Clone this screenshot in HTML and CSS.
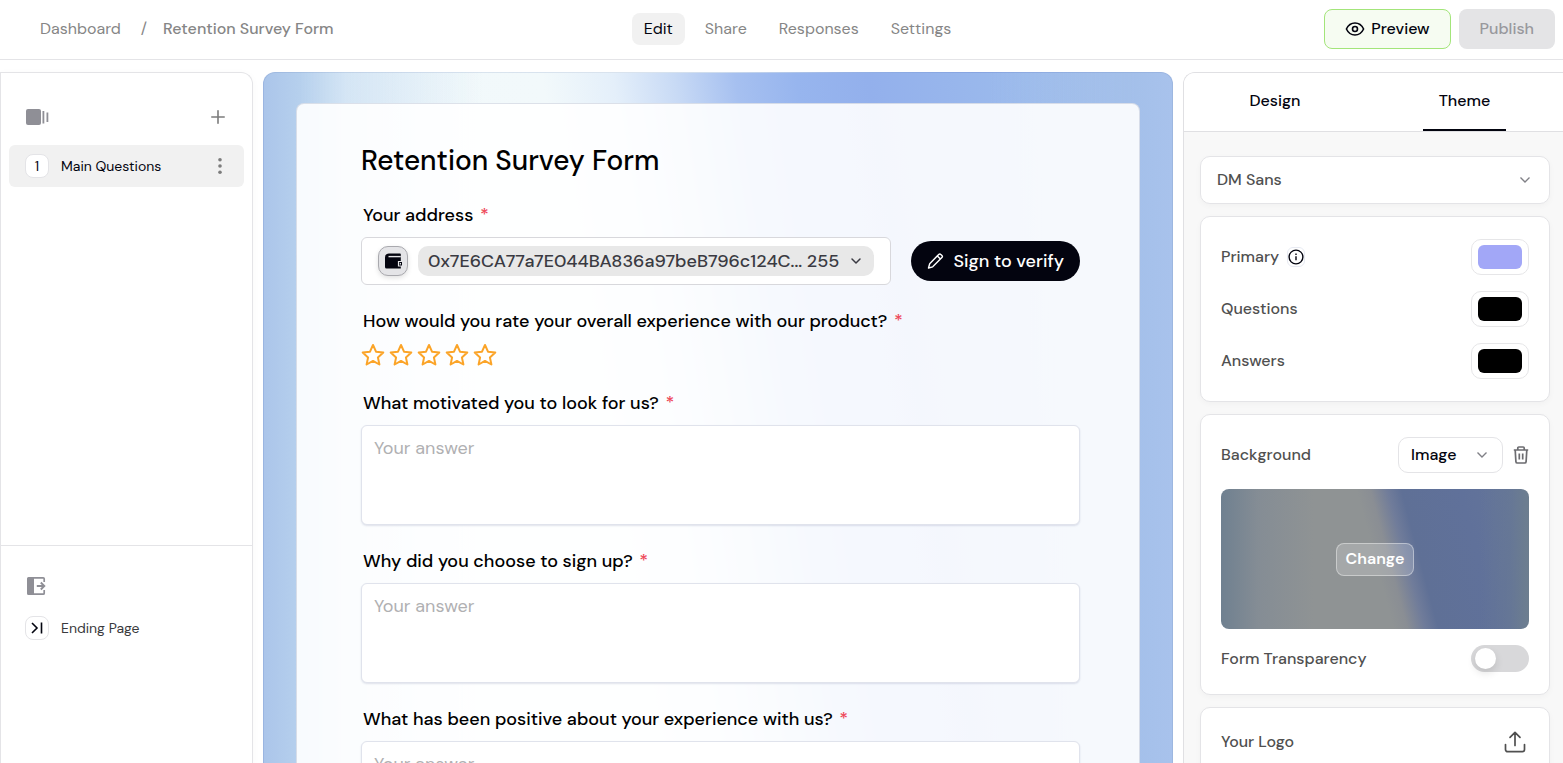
FILE: index.html
```html
<!DOCTYPE html>
<html lang="en">
<head>
<meta charset="utf-8">
<meta name="viewport" content="width=device-width, initial-scale=1">
<title>Retention Survey Form</title>
<link rel="stylesheet" href="styles.css">
</head>
<body>
<header class="topbar">
  <nav class="crumbs" aria-label="Breadcrumb">
    <a href="#">Dashboard</a><span class="slash">/</span><a href="#" class="current">Retention Survey Form</a>
  </nav>
  <nav class="tabs" aria-label="Form sections">
    <a href="#" class="active">Edit</a>
    <a href="#">Share</a>
    <a href="#">Responses</a>
    <a href="#">Settings</a>
  </nav>
  <div class="actions">
    <button class="btn preview" type="button">
      <svg width="20" height="20" viewBox="0 0 20 20" fill="none" stroke="currentColor" stroke-width="1.600"><path d="M1.400 10C3.200 6.200 6.300 4 10 4s6.800 2.200 8.600 6c-1.800 3.800-4.900 6-8.600 6s-6.800-2.200-8.600-6z" stroke-linejoin="round"/><circle cx="10" cy="10" r="2.500"/></svg>
      Preview
    </button>
    <button class="btn publish" type="button" disabled>Publish</button>
  </div>
</header>

<main class="workspace">
  <aside class="pages">
    <section class="pages-top">
      <div class="pages-head">
        <svg width="24" height="18" viewBox="0 0 24 18" fill="currentColor"><rect x="0" y="1" width="15" height="16" rx="2"/><rect x="16.500" y="3" width="1.800" height="12.500"/><rect x="20.500" y="4.500" width="1.800" height="9.500"/></svg>
        <button class="icon-btn" type="button" aria-label="Add page">
          <svg width="14" height="14" viewBox="0 0 14 14" stroke="currentColor" stroke-width="1.600" stroke-linecap="round"><path d="M7 .8v12.400M.8 7h12.400"/></svg>
        </button>
      </div>
      <div class="page-row selected">
        <span class="badge">1</span>
        <span class="page-name">Main Questions</span>
        <button class="icon-btn" type="button" aria-label="Page options">
          <svg width="14" height="18" viewBox="0 0 14 18" fill="currentColor"><circle cx="7" cy="2.700" r="1.800"/><circle cx="7" cy="9" r="1.800"/><circle cx="7" cy="15.300" r="1.800"/></svg>
        </button>
      </div>
    </section>
    <section class="pages-end">
      <div class="end-head">
        <svg width="20" height="20" viewBox="0 0 20 20" fill="none"><path d="M2.500 1H8v18H2.500A1.500 1.500 0 0 1 1 17.500v-15A1.500 1.500 0 0 1 2.500 1z" fill="currentColor"/><path d="M7 1.800h10.200a1 1 0 0 1 1 1V6M7 18.200h10.200a1 1 0 0 0 1-1V14" stroke="currentColor" stroke-width="1.700"/><path d="M10.800 10h7M14.800 6.500l3.500 3.500-3.500 3.500" stroke="currentColor" stroke-width="1.900"/></svg>
      </div>
      <div class="page-row">
        <span class="badge"><svg width="12" height="12" viewBox="0 0 12 12" fill="none" stroke="currentColor" stroke-width="1.600"><path d="M1 1l5 5-5 5M10.500.5v11"/></svg></span>
        <span class="page-name ending">Ending Page</span>
      </div>
    </section>
  </aside>

  <section class="canvas">
    <form class="survey">
      <h1>Retention Survey Form</h1>

      <div class="question">
        <label for="wallet">Your address <span class="req">*</span></label>
        <div class="address-line">
          <div class="address-box">
            <span class="wallet-icon"><svg width="18" height="18" viewBox="0 0 18 18"><path d="M5 1.500h11a.8.800 0 0 1 .8.800v14.200H2.500A1.500 1.500 0 0 1 1 15V5.500a4 4 0 0 1 4-4z" fill="#03040f"/><path d="M4.500 4.600h12.300" stroke="#e4e4e7" stroke-width="1.400"/><path d="M18 9.500h-3.500v4.500H18" fill="#03040f" stroke="#e4e4e7" stroke-width="1.200"/><path d="M15.800 11h1.200v1.500h-1.200z" fill="#e4e4e7"/></svg></span>
            <button class="address-pill" id="wallet" type="button">
              <span>0x7E6CA77a7E044BA836a97beB796c124C... 255</span>
              <svg width="12" height="12" viewBox="0 0 12 12" fill="none" stroke="currentColor" stroke-width="1.500" stroke-linecap="round" stroke-linejoin="round"><path d="M2 4l4 4 4-4"/></svg>
            </button>
          </div>
          <button class="sign" type="button">
            <svg width="18" height="18" viewBox="0 0 18 18" fill="none" stroke="currentColor" stroke-width="1.400" stroke-linejoin="round"><path d="M1.500 16l1.200-4.200 9-9.400a1.500 1.500 0 0 1 2.100 0l1.100 1.100a1.500 1.500 0 0 1 0 2.100l-9.200 9.200zM10.600 4.200l2.900 2.900"/></svg>
            Sign to verify
          </button>
        </div>
      </div>

      <fieldset class="question">
        <legend>How would you rate your overall experience with our product? <span class="req">*</span></legend>
        <svg class="defs" width="0" height="0"><symbol id="star" viewBox="0 0 24 24"><path d="M12 2l3 6.700 7.300.8-5.400 4.900 1.500 7.100L12 17.900l-6.400 3.600 1.500-7.100-5.400-4.900L9 8.700z"/></symbol></svg>
        <div class="stars">
          <label><input type="radio" name="rate" value="1" aria-label="1 star"><svg><use href="#star"/></svg></label>
          <label><input type="radio" name="rate" value="2" aria-label="2 stars"><svg><use href="#star"/></svg></label>
          <label><input type="radio" name="rate" value="3" aria-label="3 stars"><svg><use href="#star"/></svg></label>
          <label><input type="radio" name="rate" value="4" aria-label="4 stars"><svg><use href="#star"/></svg></label>
          <label><input type="radio" name="rate" value="5" aria-label="5 stars"><svg><use href="#star"/></svg></label>
        </div>
      </fieldset>

      <div class="question">
        <label for="q1">What motivated you to look for us? <span class="req">*</span></label>
        <textarea id="q1" placeholder="Your answer"></textarea>
      </div>
      <div class="question">
        <label for="q2">Why did you choose to sign up? <span class="req">*</span></label>
        <textarea id="q2" placeholder="Your answer"></textarea>
      </div>
      <div class="question">
        <label for="q3">What has been positive about your experience with us? <span class="req">*</span></label>
        <textarea id="q3" placeholder="Your answer"></textarea>
      </div>
    </form>
  </section>

  <aside class="inspector">
    <div class="inspector-tabs">
      <button type="button">Design</button>
      <button type="button" class="active">Theme</button>
    </div>
    <div class="inspector-body">
      <div class="card select-wrap font-select">
        <select aria-label="Font"><option>DM Sans</option></select>
        <svg width="12" height="12" viewBox="0 0 12 12" fill="none" stroke="currentColor" stroke-width="1.400"><path d="M1.500 3.500L6 8l4.500-4.500"/></svg>
      </div>

      <div class="card colors">
        <div class="row">
          <label for="c1">Primary</label>
          <button class="info" type="button" aria-label="About the primary colour"><svg width="16" height="16" viewBox="0 0 16 16" fill="none" stroke="currentColor" stroke-width="1.400"><circle cx="8" cy="8" r="6.900"/><path d="M8 7.200v4M8 4.500v1.400"/></svg></button>
          <input id="c1" type="color" value="#a2a7f7">
        </div>
        <div class="row"><label for="c2">Questions</label><input id="c2" type="color" value="#000000"></div>
        <div class="row"><label for="c3">Answers</label><input id="c3" type="color" value="#000000"></div>
      </div>

      <div class="card background">
        <div class="row">
          <label for="bg">Background</label>
          <div class="select-wrap kind-select">
            <select id="bg"><option>Image</option></select>
            <svg width="12" height="12" viewBox="0 0 12 12" fill="none" stroke="currentColor" stroke-width="1.400"><path d="M1.500 3.500L6 8l4.500-4.500"/></svg>
          </div>
          <button class="trash" type="button" aria-label="Remove background"><svg width="16" height="18" viewBox="0 0 16 18" fill="none" stroke="currentColor" stroke-width="1.700"><path d="M.8 4h14.400M4.800 4V2a1 1 0 0 1 1-1h4.400a1 1 0 0 1 1 1v2M2.200 4l.7 11.600a1.500 1.500 0 0 0 1.500 1.400h7.200a1.500 1.500 0 0 0 1.500-1.400L13.800 4M6.300 7.500v6M9.700 7.500v6"/></svg></button>
        </div>
        <div class="thumb"><button type="button">Change</button></div>
        <div class="row">
          <label for="transparent">Form Transparency</label>
          <input id="transparent" class="switch" type="checkbox" role="switch">
        </div>
      </div>

      <div class="card logo">
        <div class="row">
          <span>Your Logo</span>
          <button class="upload" type="button" aria-label="Upload logo"><svg width="22" height="22" viewBox="0 0 22 22" fill="none" stroke="currentColor" stroke-width="1.700" stroke-linecap="round" stroke-linejoin="round"><path d="M11 14.500V1.500M6 6.300l5-5 5 5M1.500 13.500v5A2.200 2.200 0 0 0 3.700 20.700h14.600a2.200 2.200 0 0 0 2.200-2.200v-5"/></svg></button>
        </div>
      </div>
    </div>
  </aside>
</main>
</body>
</html>
```
FILE: styles.css
```css
* { box-sizing: border-box; }

body {
  margin: 0;
  height: 100vh;
  display: flex;
  flex-direction: column;
  overflow: hidden;
  background: #fff;
  color: #03040f;
  font: 500 16px/20px "DM Sans", Inter, sans-serif;
}

button, select, textarea, input { font: inherit; color: inherit; }
button { border: 0; padding: 0; background: none; }
a { color: inherit; text-decoration: none; }
svg { display: block; flex: none; }

/* Top bar */
.topbar {
  display: grid;
  grid-template-columns: 1fr auto 1fr;
  align-items: center;
  flex: none;
  height: 60px;
  padding: 0 8px 2px 40px;
  border-bottom: 1px solid #e4e4e7;
  color: #868686;
  font-weight: 400;
}
.crumbs { display: flex; }
.slash { margin: 0 16px 0 20px; }
.current { font-weight: 500; }
.tabs { display: flex; gap: 8px; }
.tabs a { padding: 6px 12px; border-radius: 8px; }
.tabs .active { background: #f1f1f1; color: #03040f; }
.actions { display: flex; justify-content: flex-end; gap: 8px; }
.btn {
  display: flex;
  align-items: center;
  gap: 6px;
  height: 40px;
  padding: 0 20px;
  border: 1px solid transparent;
  border-radius: 8px;
  font-weight: 500;
}
.preview { border-color: #a3e57a; background: #f6fcf2; color: #03040f; }
.publish { background: #e4e4e6; background-clip: border-box; color: #98989d; }

/* Workspace */
.workspace {
  display: grid;
  grid-template-columns: 253px minmax(0, 1fr) 380px;
  gap: 10px;
  flex: 1;
  min-height: 0;
  padding-top: 12px;
}

/* Page list */
.pages {
  display: grid;
  grid-template-rows: 13fr 6fr;
  border: 1px solid #e4e4e7;
  border-bottom: 0;
  border-radius: 0 12px 0 0;
  box-shadow: 0 2px 8px rgba(0, 0, 0, .03);
}
.pages-top { padding: 30px 8px 0; }
.pages-end { padding: 30px 8px 0; border-top: 1px solid #e4e4e7; }
.icon-btn { display: grid; place-items: center; width: 20px; height: 20px; color: #7c7c7c; }
.pages-head {
  display: flex;
  align-items: center;
  justify-content: space-between;
  height: 28px;
  margin-bottom: 14px;
  padding: 0 16px 0 17px;
  color: #8f8f96;
}
.end-head { margin-bottom: 11px; padding-left: 17px; color: #8f8f96; }
.page-row {
  display: flex;
  align-items: center;
  gap: 12px;
  height: 42px;
  padding: 0 14px 0 16px;
  border-radius: 6px;
  font-size: 14px;
  font-weight: 400;
}
.page-row.selected { background: #f1f1f1; }
.badge {
  display: grid;
  place-items: center;
  width: 24px;
  height: 24px;
  border: 1px solid #e4e4e7;
  border-radius: 8px;
  background: #fff;
}
.page-name { flex: 1; }
.page-name.ending { color: #3a3a3d; }

/* Canvas */
.canvas {
  min-width: 0;
  overflow: hidden;
  padding: 30px 32px 0;
  border: 1px solid rgba(80, 110, 170, .15);
  border-bottom: 0;
  border-radius: 12px 12px 0 0;
  background:
    linear-gradient(90deg, #abc5ea 0, #b6d0ed 4%, rgba(200, 221, 242, .7) 9%, rgba(220, 235, 247, 0) 24%),
    linear-gradient(270deg, #a8c2ec 0, #a4c0ea 4%, rgba(163, 191, 234, 0) 20%),
    linear-gradient(81deg, #f0f8fa 0, #f2f9fb 38%, #e4effa 45%, #c8daf5 51%, #a6c0f0 57%, #97b5ee 63%, #93b0ec 70%, #9cbbec 86%, #a5c0ea 100%);
}
.survey {
  min-height: 100%;
  padding: 39px 59px 0 64px;
  border: 1px solid rgba(90, 110, 150, .2);
  border-bottom: 0;
  border-radius: 8px 8px 0 0;
  background: rgba(255, 255, 255, .9);
  color: #000;
  font-size: 18px;
  line-height: 24px;
}
.survey h1 { margin: 0 0 24px; font-size: 28px; font-weight: 500; line-height: 36px; }
.question { display: flex; flex-direction: column; gap: 10px; margin: 0 0 24px; padding: 0; border: 0; }
fieldset.question { display: block; }
.question > label, .question > legend { padding: 0 2px; }
.question > legend { margin-bottom: 10px; }
.req { margin-left: 2px; color: #ee4a5a; }
.address-line { display: flex; align-items: center; gap: 20px; }
.address-box {
  display: flex;
  align-items: center;
  gap: 10px;
  flex: 1;
  min-width: 0;
  height: 48px;
  padding: 0 16px;
  border: 1px solid #d8d8dc;
  border-radius: 6px;
  background: #fff;
}
.wallet-icon {
  display: grid;
  place-items: center;
  flex: none;
  width: 30px;
  height: 30px;
  border: 1px solid #a9a9ae;
  border-radius: 10px;
  background: #e4e4e7;
  box-shadow: 0 2px 5px rgba(0, 0, 0, .12);
}
.address-pill {
  display: flex;
  align-items: center;
  justify-content: space-between;
  gap: 8px;
  flex: 1;
  min-width: 0;
  height: 30px;
  padding: 0 12px 0 10px;
  border-radius: 10px;
  background: #e8e8e8;
  color: #3a3a42;
  white-space: nowrap;
}
.sign {
  display: flex;
  align-items: center;
  gap: 8px;
  height: 40px;
  padding: 0 16px;
  border-radius: 20px;
  background: #03040f;
  color: #fff;
}
.defs { position: absolute; }
.stars { display: flex; gap: 4px; }
.stars label { display: grid; width: 24px; height: 24px; }
.stars input { grid-area: 1 / 1; margin: 0; opacity: 0; }
.stars svg { grid-area: 1 / 1; width: 24px; height: 24px; fill: #fff; stroke: #fba428; stroke-width: 2; stroke-linejoin: round; }
.question textarea {
  display: block;
  width: 100%;
  height: 100px;
  padding: 10px 12px;
  border: 1px solid #e0e3ec;
  border-radius: 6px;
  background: #fff;
  box-shadow: 0 1px 2px rgba(40, 60, 110, .14);
  font-weight: 400;
  resize: none;
}
.question textarea::placeholder { color: #b0b0b2; opacity: 1; }

/* Inspector */
.inspector {
  display: flex;
  flex-direction: column;
  min-height: 0;
  overflow: hidden;
  border: 1px solid #e0e0e3;
  border-width: 1px 0 0 1px;
  border-radius: 12px 0 0 0;
  background: #f8f8f8;
}
.inspector-tabs {
  display: grid;
  grid-template-columns: 12fr 13fr;
  flex: none;
  height: 59px;
  border-bottom: 1px solid #e0e0e3;
  background: #fff;
}
.inspector-tabs button { justify-self: center; padding: 0 16px; border-bottom: 2px solid transparent; }
.inspector-tabs button.active { border-color: #03040f; }
.inspector-body { display: flex; flex-direction: column; gap: 12px; padding: 24px 13px 0 16px; color: #505050; }
.card {
  flex: none;
  border: 1px solid #e4e4e7;
  border-radius: 10px;
  background: #fff;
  box-shadow: 0 2px 6px rgba(0, 0, 0, .03);
}
.select-wrap { display: grid; grid-template-columns: 1fr auto; align-items: center; color: #808086; }
.select-wrap select {
  grid-area: 1 / 1 / 2 / 3;
  width: 100%;
  height: 100%;
  padding: 0 16px;
  border: 0;
  background: none;
  appearance: none;
}
.select-wrap svg { grid-area: 1 / 2; pointer-events: none; }
.font-select { height: 48px; }
.font-select select { color: #505050; }
.font-select svg { margin-right: 18px; }
.row { display: flex; align-items: center; }
.row > label, .row > span { flex: 1; }
.colors { display: flex; flex-direction: column; gap: 16px; padding: 22px 20px; }
.colors .row > label { flex: none; }
.colors input {
  width: 58px;
  height: 36px;
  margin-left: auto;
  padding: 5px 6px;
  border: 1px solid #e6e6e8;
  border-radius: 10px;
  background: #fff;
  appearance: none;
}
.colors input::-webkit-color-swatch-wrapper { padding: 0; }
.colors input::-webkit-color-swatch { border: 0; border-radius: 6px; }
.info {
  display: grid;
  place-items: center;
  width: 18px;
  height: 20px;
  margin-left: 8px;
  border: 1px solid #e7eaf2;
  border-radius: 6px;
  color: #03040f;
}
.background { padding: 22px 20px; }
.kind-select { width: 105px; height: 36px; border: 1px solid #e4e4e7; border-radius: 10px; }
.kind-select select { padding: 0 12px; color: #03040f; }
.kind-select svg { margin-right: 14px; }
.trash { margin-left: 10px; color: #6c6c70; }
.thumb {
  display: grid;
  place-items: center;
  height: 140px;
  margin: 16px 0;
  border-radius: 8px;
  background:
    linear-gradient(90deg, #6f8090 0, rgba(128, 138, 149, .7) 12%, rgba(143, 148, 150, 0) 30%),
    linear-gradient(270deg, #6d7e8f 0, rgba(104, 121, 147, .6) 6%, rgba(96, 113, 154, 0) 16%),
    linear-gradient(75deg, #8f9394 0, #8f9394 50%, #8a8e94 54%, #707c9a 59%, #5f7096 63%, #60719a 80%, #65769a 100%);
}
.thumb button {
  height: 33px;
  padding: 0 9px;
  border: 1px solid rgba(255, 255, 255, .4);
  border-radius: 8px;
  background: rgba(255, 255, 255, .2);
  color: #fff;
  font-weight: 600;
}
.switch {
  width: 58px;
  height: 27px;
  margin: 0;
  padding: 3px 4px;
  border-radius: 14px;
  background: #d8d8da;
  appearance: none;
}
.switch::before {
  content: "";
  display: block;
  width: 21px;
  height: 21px;
  border-radius: 50%;
  background: #fff;
  box-shadow: 0 4px 8px rgba(0, 0, 0, .12);
}
.logo { height: 120px; padding: 23px 23px 0 20px; }
```
